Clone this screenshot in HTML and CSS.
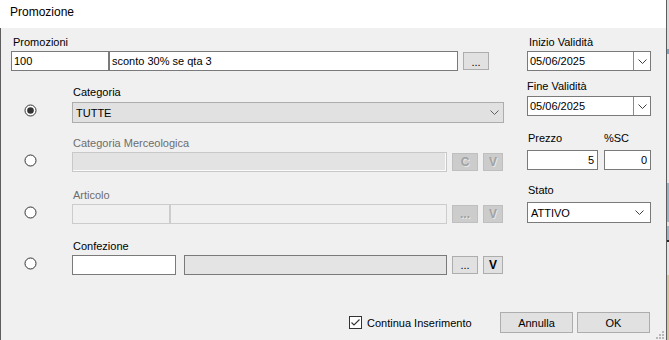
FILE: index.html
```html
<!DOCTYPE html>
<html lang="it">
<head>
<meta charset="utf-8">
<title>Promozione</title>
<link rel="stylesheet" href="styles.css">
</head>
<body>
<div class="screen">
  <div class="window">
    <div class="titlebar">Promozione</div>
    <div class="body">
      <div class="main">
        <div class="left">
          <div class="label">Promozioni</div>
          <div class="frow">
            <div class="tb w-code">100</div>
            <div class="tb w-desc">sconto 30% se qta 3</div>
            <div class="btn btn-dots">...</div>
          </div>

          <div class="section s-cat">
            <div class="label">Categoria</div>
            <div class="radio-cell">
              <svg width="13" height="13" viewBox="0 0 13 13"><circle cx="6.5" cy="6.5" r="5.5" fill="#fff" stroke="#333" stroke-width="1"/><circle cx="6.5" cy="6.5" r="3.3" fill="#333"/></svg>
            </div>
            <div class="frow">
              <div class="combo combo-ro w-cat">
                <span class="ctext">TUTTE</span>
                <svg class="chev" width="9" height="5" viewBox="0 0 9 5"><polyline points="0.5,0.5 4.5,4.5 8.5,0.5" fill="none" stroke="#606060" stroke-width="1"/></svg>
              </div>
            </div>
          </div>

          <div class="section s-merc">
            <div class="label disabled">Categoria Merceologica</div>
            <div class="radio-cell">
              <svg width="13" height="13" viewBox="0 0 13 13"><circle cx="6.5" cy="6.5" r="5.5" fill="#fff" stroke="#333" stroke-width="1"/></svg>
            </div>
            <div class="frow">
              <div class="tb tb-dis w-full"></div>
              <div class="btn btn-dis btn-c">C</div>
              <div class="btn btn-dis btn-v">V</div>
            </div>
          </div>

          <div class="section s-art">
            <div class="label disabled">Articolo</div>
            <div class="radio-cell">
              <svg width="13" height="13" viewBox="0 0 13 13"><circle cx="6.5" cy="6.5" r="5.5" fill="#fff" stroke="#333" stroke-width="1"/></svg>
            </div>
            <div class="frow">
              <div class="tb tb-flat w-art-a"></div>
              <div class="tb tb-flat w-art-b"></div>
              <div class="btn btn-dis btn-c">...</div>
              <div class="btn btn-dis btn-v">V</div>
            </div>
          </div>

          <div class="section s-conf">
            <div class="label">Confezione</div>
            <div class="radio-cell">
              <svg width="13" height="13" viewBox="0 0 13 13"><circle cx="6.5" cy="6.5" r="5.5" fill="#fff" stroke="#333" stroke-width="1"/></svg>
            </div>
            <div class="frow">
              <div class="tb w-conf-a"></div>
              <div class="tb tb-ro w-conf-b"></div>
              <div class="btn btn-c">...</div>
              <div class="btn btn-v btn-bold">V</div>
            </div>
          </div>
        </div>

        <div class="right">
          <div class="label">Inizio Validità</div>
          <div class="date r-date1">
            <span class="dtext">05/06/2025</span>
            <span class="ddrop"><svg width="9" height="5" viewBox="0 0 9 5"><polyline points="0.5,0.5 4.5,4.5 8.5,0.5" fill="none" stroke="#404040" stroke-width="1"/></svg></span>
          </div>
          <div class="label r-lab2">Fine Validità</div>
          <div class="date r-date2">
            <span class="dtext">05/06/2025</span>
            <span class="ddrop"><svg width="9" height="5" viewBox="0 0 9 5"><polyline points="0.5,0.5 4.5,4.5 8.5,0.5" fill="none" stroke="#404040" stroke-width="1"/></svg></span>
          </div>
          <div class="lrow r-lab3">
            <span class="l-prezzo">Prezzo</span>
            <span>%SC</span>
          </div>
          <div class="frow r-nums">
            <div class="tb num w-prezzo">5</div>
            <div class="tb num w-sc">0</div>
          </div>
          <div class="label r-lab4">Stato</div>
          <div class="combo w-stato r-stato">
            <span class="ctext">ATTIVO</span>
            <svg class="chev" width="9" height="5" viewBox="0 0 9 5"><polyline points="0.5,0.5 4.5,4.5 8.5,0.5" fill="none" stroke="#404040" stroke-width="1"/></svg>
          </div>
        </div>
      </div>

      <div class="footer">
        <div class="check-group">
          <svg width="13" height="13" viewBox="0 0 13 13"><rect x="0.5" y="0.5" width="12" height="12" fill="#fff" stroke="#333"/><polyline points="2.5,6.5 5,9 10.5,3.5" fill="none" stroke="#333" stroke-width="1.1"/></svg>
          <span class="check-text">Continua Inserimento</span>
        </div>
        <div class="btn btn-foot">Annulla</div>
        <div class="btn btn-foot">OK</div>
      </div>
      <svg class="grip" width="8" height="8" viewBox="0 0 8 8">
        <rect x="6" y="0" width="2" height="2" fill="#b8b8b8"/>
        <rect x="3" y="3" width="2" height="2" fill="#b8b8b8"/>
        <rect x="6" y="3" width="2" height="2" fill="#b8b8b8"/>
        <rect x="0" y="6" width="2" height="2" fill="#b8b8b8"/>
        <rect x="3" y="6" width="2" height="2" fill="#b8b8b8"/>
        <rect x="6" y="6" width="2" height="2" fill="#b8b8b8"/>
      </svg>
    </div>
  </div>
  <div class="strip"></div>
</div>
</body>
</html>
```

FILE: styles.css
```css
html, body {
  margin: 0;
  padding: 0;
  width: 669px;
  height: 340px;
  overflow: hidden;
  font-family: "Liberation Sans", Arial, sans-serif;
  font-size: 11px;
  color: #000;
}

.screen {
  display: flex;
  width: 669px;
  height: 340px;
}

.window {
  width: 667px;
  height: 340px;
  box-sizing: border-box;
  border-right: 1px solid #5c5c5c;
  display: flex;
  flex-direction: column;
  background: #f0f0f0;
}

.strip {
  flex: 1;
  background: linear-gradient(to bottom,
    #dadada 0, #dadada 49px,
    #7fa3bd 49px, #7fa3bd 54px,
    #e6e6e6 54px, #e6e6e6 183px,
    #9ab3c4 183px, #9ab3c4 222px,
    #e2e2e2 222px, #e2e2e2 226px,
    #9ab3c4 226px, #9ab3c4 240px,
    #2a2a2a 240px, #2a2a2a 242px,
    #e2e2e2 242px, #e2e2e2 275px,
    #d3c49c 275px, #d3c49c 340px);
}

.titlebar {
  height: 28px;
  background: #fff;
  font-size: 12px;
  line-height: 25px;
  padding-left: 10px;
  flex: none;
}

.body {
  flex: 1;
  position: relative;
  border-left: 1px solid #5e5e5e;
  display: flex;
  flex-direction: column;
  padding: 8px 0 0 10px;
}

.main {
  display: flex;
}

.left {
  width: 493px;
}

.right {
  margin-left: 23px;
  width: 124px;
}

.label {
  line-height: 13px;
  height: 13px;
  padding-left: 2px;
  white-space: nowrap;
}

.label.disabled {
  color: #6d6d6d;
}

.frow {
  display: flex;
  align-items: center;
  margin-top: 2px;
}

.tb {
  box-sizing: border-box;
  height: 20px;
  border: 1px solid #7a7a7a;
  background: #fff;
  line-height: 18px;
  padding: 0 2px;
  white-space: nowrap;
  overflow: hidden;
}

.tb-dis {
  background: #e3e3e3;
  border-color: #c8c8c8;
  box-shadow: inset -1px -1px 0 #fafafa;
}

.tb-flat {
  background: #f0f0f0;
  border-color: #cccccc;
}

.tb-ro {
  background: #e4e4e4;
}

.num {
  text-align: right;
  padding-right: 3px;
}

.w-code { width: 98px; }
.w-desc { width: 349px; }
.w-full { width: 375px; }
.w-art-a { width: 98px; }
.w-art-b { width: 277px; }
.w-conf-a { width: 104px; }
.w-conf-b { width: 263px; margin-left: 8px; }
.w-prezzo { width: 71px; }
.w-sc { width: 47px; margin-left: 6px; }

.btn {
  box-sizing: border-box;
  height: 18px;
  border: 1px solid #adadad;
  background: #e1e1e1;
  display: flex;
  align-items: center;
  justify-content: center;
  line-height: 16px;
  white-space: nowrap;
}

.btn-dots {
  width: 26px;
  margin-left: 5px;
  padding-top: 1px;
}

.btn-c {
  width: 26px;
  margin-left: 5px;
}

.btn-v {
  width: 20px;
  margin-left: 5px;
}

.btn-bold {
  font-weight: bold;
  font-size: 12px;
}

.btn-dis {
  background: #cccccc;
  border-color: #bfbfbf;
  color: #a2a2a2;
  font-weight: bold;
  font-size: 12px;
  text-shadow: 1px 1px 0 #e6e6e6;
}

.section {
  display: grid;
  grid-template-columns: 61px 1fr;
  grid-template-rows: 13px auto;
}

.section .label {
  grid-column: 2;
  grid-row: 1;
  padding-left: 1px;
}

.section .radio-cell {
  grid-column: 1;
  grid-row: 2;
  display: flex;
  align-items: center;
  padding-left: 13px;
  margin-top: -1px;
}

.section .radio-cell svg {
  display: block;
}

.section .frow {
  grid-column: 2;
  grid-row: 2;
}

.s-cat { margin-top: 15px; }
.s-cat .frow { margin-top: 3px; }
.s-merc { margin-top: 14px; }
.s-art { margin-top: 17px; }
.s-conf { margin-top: 16px; }

.combo {
  box-sizing: border-box;
  height: 21px;
  border: 1px solid #7a7a7a;
  background: #fff;
  display: flex;
  align-items: center;
  padding: 0 0 0 3px;
}

.combo-ro {
  background: #e1e1e1;
  border-color: #adadad;
}

.ctext {
  flex: 1;
  white-space: nowrap;
}

.chev {
  display: block;
  margin-right: 5px;
}

.w-cat { width: 432px; }
.w-cat .chev { margin-right: 4px; }
.w-stato { width: 124px; }
.w-stato .chev { margin-right: 6px; }

.date {
  box-sizing: border-box;
  height: 20px;
  width: 124px;
  border: 1px solid #7a7a7a;
  background: #fff;
  display: flex;
}

.dtext {
  flex: 1;
  line-height: 18px;
  padding-left: 2px;
}

.ddrop {
  width: 17px;
  box-sizing: border-box;
  border-left: 1px solid #8a8a8a;
  display: flex;
  align-items: center;
  justify-content: center;
}

.ddrop svg { display: block; }

.r-date1 { margin-top: 2px; }
.r-lab2 { margin-top: 9px; padding-left: 0; }
.r-date2 { margin-top: 3px; }

.lrow {
  display: flex;
  line-height: 13px;
  height: 13px;
  padding-left: 1px;
}

.l-prezzo { width: 76px; }

.r-lab3 { margin-top: 16px; }
.r-nums { margin-top: 5px; }
.r-lab4 { margin-top: 14px; padding-left: 1px; }
.r-stato { margin-top: 5px; }

.footer {
  margin-top: auto;
  display: flex;
  justify-content: flex-end;
  align-items: center;
  padding: 0 16px 7px 0;
}

.check-group {
  width: 147px;
  display: flex;
  align-items: center;
}

.check-group svg { display: block; }

.check-text {
  margin-left: 5px;
  white-space: nowrap;
}

.btn-foot {
  width: 73px;
  height: 21px;
  margin-left: 4px;
}

.btn-foot:first-of-type { margin-left: 0; }

.grip {
  position: absolute;
  right: 2px;
  bottom: 1px;
  display: block;
}
```
